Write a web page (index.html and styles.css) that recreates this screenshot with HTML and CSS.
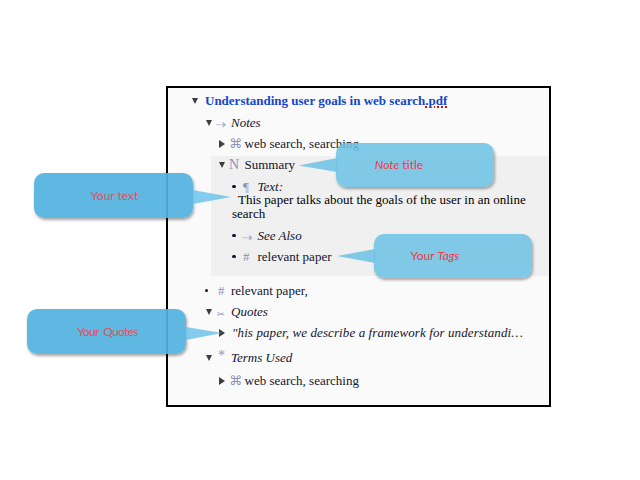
FILE: index.html
```html
<!DOCTYPE html>
<html lang="en">
<head>
<meta charset="utf-8">
<title>Understanding user goals in web search.pdf</title>
<link rel="stylesheet" href="styles.css">
</head>
<body>
<main class="page">
  <section class="doc">
    <div class="row plain"><span class="mark down"></span><h1 class="title">Understanding user goals in web search<span class="misspelt">.pdf</span></h1></div>
    <div class="group top-group">
      <div class="row"><span class="mark down"></span><span class="icon arrow">⇢</span><em>Notes</em></div>
      <div class="group">
        <div class="row"><span class="mark right"></span><span class="icon cmd">⌘</span><span>web search, searching</span></div>
        <div class="band">
          <div class="row summary-row"><span class="mark down"></span><span class="icon big">N</span><span>Summary</span></div>
          <div class="group inner">
            <div class="row"><span class="mark dot"></span><span class="icon para">¶</span><em>Text:</em></div>
            <p class="body-text">This paper talks about the goals of the user in an online search</p>
            <div class="row"><span class="mark dot"></span><span class="icon arrow">⇢</span><em>See Also</em></div>
            <div class="row"><span class="mark dot"></span><span class="icon para">#</span><span>relevant paper</span></div>
          </div>
        </div>
      </div>
      <div class="row tag-row"><span class="mark dot"></span><span class="icon hash">#</span><span>relevant paper,</span></div>
      <div class="row"><span class="mark down"></span><span class="icon cut">✂</span><em>Quotes</em></div>
      <div class="group">
        <div class="row plain"><span class="mark right"></span><em class="quote">"his paper, we describe a framework for understandi…</em></div>
      </div>
      <div class="row terms-row"><span class="mark down"></span><span class="icon star">*</span><em>Terms Used</em></div>
      <div class="group last-group">
        <div class="row"><span class="mark right"></span><span class="icon cmd">⌘</span><span>web search, searching</span></div>
      </div>
    </div>
  </section>

  <div class="callout dark text-call">
    <svg class="tail" width="40" height="16" viewBox="0 0 40 16"><path d="M0 1L38 8L0 15Z"/></svg>
    <span class="label">Your text</span>
  </div>
  <div class="callout dark quotes-call">
    <svg class="tail" width="36" height="16" viewBox="0 0 36 16"><path d="M0 1L36 7L0 14Z"/></svg>
    <span class="label">Your Quotes</span>
  </div>
  <div class="callout light note-call">
    <svg class="tail" width="38" height="16" viewBox="0 0 38 16"><path d="M38 1L0 8.5L38 15Z"/></svg>
    <span class="label"><i>Note</i> title</span>
  </div>
  <div class="callout light tags-call">
    <svg class="tail" width="38" height="16" viewBox="0 0 38 16"><path d="M38 1L0 8L38 15Z"/></svg>
    <span class="label">Your <i>Tags</i></span>
  </div>
</main>
</body>
</html>
```
FILE: styles.css
```css
* { box-sizing: border-box; }
html, body { margin: 0; background: #fff; }
.page {
  position: relative;
  width: 640px;
  height: 480px;
  padding: 86px 0 0 166px;
  font: 13px/14px "Liberation Serif", serif;
  color: #14142e;
}
.doc {
  width: 385px;
  height: 321px;
  border: 2px solid #000;
  background: #fafafa;
  padding: 2px 0 0 24px;
}
.row {
  display: flex;
  align-items: center;
  height: 21px;
  white-space: nowrap;
}
.group { padding-left: 13.5px; }
.top-group { margin-top: 1px; }
.last-group { margin-top: 2px; }
.title {
  margin: 0;
  font: bold 13px/14px "Liberation Serif", serif;
  color: #1347c9;
}
.misspelt { text-decoration: underline dotted #d01010 1.5px; text-underline-offset: 2px; }
.mark { flex: none; width: 10px; display: flex; align-items: center; }
.plain .mark { width: 13px; }
.down::before {
  content: "";
  border-left: 3.5px solid transparent;
  border-right: 3.5px solid transparent;
  border-top: 6px solid #3c3c3c;
}
.right::before {
  content: "";
  border-top: 4px solid transparent;
  border-bottom: 4px solid transparent;
  border-left: 6.5px solid #3c3c3c;
}
.dot::before {
  content: "";
  width: 3.5px;
  height: 3.5px;
  border-radius: 50%;
  background: #14142e;
}
.tag-row .dot::before { transform: translate(-1px, 0); }
.icon {
  flex: none;
  width: 15.5px;
  color: #8f8fb8;
}
.arrow { font: 13px/14px "DejaVu Sans", sans-serif; color: #aaaacb; transform: translate(0, 2px); }
.cmd { font: 13px/14px "DejaVu Sans", sans-serif; }
.cut { font: 9px/14px "DejaVu Sans", sans-serif; padding-left: 1.5px; transform: translate(0, 2px); }
.big { font-size: 14px; }
.para { padding-left: 1px; }
.hash { padding-left: 2.5px; }
.star { font-size: 14px; padding-left: 2.5px; transform: translate(0, -2px); }
.band {
  margin-left: -8px;
  padding-left: 8px;
  margin-top: 2px;
  height: 120px;
  background: #f0f0f0;
}
.summary-row { height: 20px; padding-bottom: 3px; }
.inner { padding-left: 13px; }
.body-text { margin: -4px 0 4px 0; text-indent: 6px; color: #000; }
.tag-row { margin-top: 4px; }
.terms-row { margin-top: 4px; }
.quote { letter-spacing: 0.1px; }
.callout {
  position: absolute;
  width: 159px;
  height: 45px;
  border-radius: 10px;
  display: flex;
  align-items: center;
  justify-content: center;
  font: 12px/14px Lato, sans-serif;
  box-shadow: 1px 2px 3px rgba(0, 0, 0, .35);
}
.tail { position: absolute; }
.dark { background: rgba(80, 178, 222, .92); color: #e0505f; }
.dark .tail path { fill: rgba(110, 195, 235, .85); }
.light { width: 158px; height: 44px; background: rgba(110, 194, 228, .88); color: #f5383f; }
.light .tail path { fill: rgba(110, 194, 228, .88); }
.text-call { left: 34px; top: 173px; }
.text-call .tail { left: 159px; top: 16px; }
.quotes-call { left: 27px; top: 309px; letter-spacing: -0.7px; word-spacing: 2.5px; }
.quotes-call .tail { left: 159px; top: 17px; }
.note-call { left: 336px; top: 143px; }
.note-call .tail { left: -37px; top: 14px; }
.tags-call { left: 374px; top: 234px; }
.tags-call .tail { left: -37px; top: 14px; }
.label { transform: translate(1px, 0); }
.note-call .label { transform: translate(-16px, 0); }
.tags-call .label { transform: translate(-18px, 0); }
```
